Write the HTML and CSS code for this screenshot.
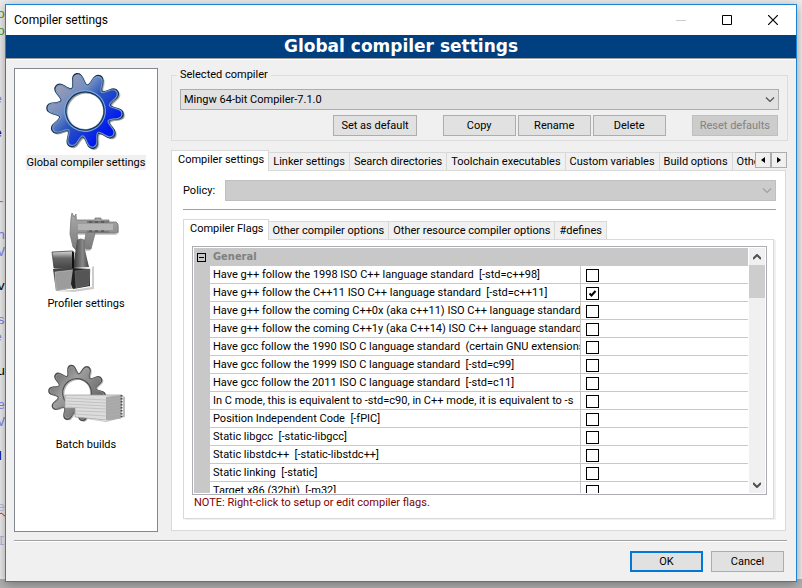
FILE: index.html
```html
<!DOCTYPE html>
<html lang="en">
<head>
<meta charset="utf-8">
<title>Compiler settings</title>
<link rel="stylesheet" href="styles.css">
</head>
<body>
<div class="editor" aria-hidden="true">
  <div class="line green">ro</div>
  <div class="line green">ro</div>
  <div class="line"></div><div class="line"></div><div class="line"></div>
  <div class="line violet cut">e</div>
  <div class="line"></div>
  <div class="line navy cut">e</div>
  <div class="line"></div><div class="line"></div><div class="line"></div>
  <div class="line orange">-</div>
  <div class="line"></div>
  <div class="line violet">th</div>
  <div class="line violet">V</div>
  <div class="line"></div>
  <div class="line">tv</div>
  <div class="line"></div>
  <div class="line violet">as</div>
  <div class="line violet cut">e</div>
  <div class="line"></div>
  <div class="line">lu</div>
  <div class="line"></div>
  <div class="line violet">e</div>
  <div class="line violet">V</div>
  <div class="line"></div>
  <div class="line navy cut">d</div>
  <div class="line"></div><div class="line"></div>
  <div class="line pale wavy">pe</div>
  <div class="line"></div>
  <div class="line pale">RI</div>
</div>

<main class="dialog">
  <header class="titlebar">
    <h1 class="caption">Compiler settings</h1>
    <button class="winbtn" aria-label="Minimize" disabled><svg width="10" height="10" viewBox="0 0 10 10"><path d="M0 5.500h10" stroke="#ccc"/></svg></button>
    <button class="winbtn" aria-label="Maximize"><svg width="10" height="10" viewBox="0 0 10 10"><path d="M.5.5h9v9h-9z" fill="none" stroke="#000"/></svg></button>
    <button class="winbtn" aria-label="Close"><svg width="10" height="10" viewBox="0 0 10 10"><path d="M0 0l10 10M10 0L0 10" stroke="#000" stroke-width="1.200"/></svg></button>
  </header>
  <h2 class="banner">Global compiler settings</h2>

  <div class="content">
    <nav class="pages" aria-label="Pages">
      <button class="page current">
        <svg class="picture" viewBox="0 0 82 82">
          <defs>
            <path id="gear" fill-rule="evenodd" d="M0-39.700Q4.500-39.700 5.500-33Q6.500-26.200 8.300-25.600Q10.100-25 14.900-29.900Q19.700-34.800 23.400-32.200Q27-29.500 23.900-23.500Q20.700-17.400 21.800-15.900Q22.900-14.300 29.700-15.500Q36.400-16.600 37.800-12.300Q39.200-8 33-5Q26.900-1.900 26.900 0Q26.900 1.900 33 5Q39.200 8 37.800 12.300Q36.400 16.600 29.700 15.500Q22.900 14.300 21.800 15.900Q20.700 17.400 23.900 23.500Q27 29.500 23.400 32.200Q19.700 34.800 14.900 29.900Q10.100 25 8.300 25.600Q6.500 26.200 5.500 33Q4.500 39.700 0 39.700Q-4.500 39.700-5.500 33Q-6.500 26.200-8.300 25.600Q-10.100 25-14.900 29.900Q-19.700 34.800-23.400 32.200Q-27 29.500-23.900 23.500Q-20.700 17.400-21.800 15.900Q-22.900 14.300-29.700 15.500Q-36.400 16.600-37.800 12.300Q-39.200 8-33 5Q-26.900 1.900-26.900 0Q-26.900-1.900-33-5Q-39.200-8-37.800-12.300Q-36.400-16.600-29.700-15.500Q-22.900-14.300-21.800-15.900Q-20.700-17.400-23.900-23.500Q-27-29.500-23.400-32.200Q-19.700-34.800-14.900-29.900Q-10.100-25-8.300-25.600Q-6.500-26.200-5.500-33Q-4.500-39.700 0-39.700ZM20 0A20 20 0 1 0-20 0A20 20 0 1 0 20 0Z"/>
            <linearGradient id="blue" gradientUnits="userSpaceOnUse" x1="-26" y1="-26" x2="10" y2="30">
              <stop offset="0" stop-color="#9a9cb4"/><stop offset=".3" stop-color="#6f8cc4"/><stop offset=".5" stop-color="#2f58bc"/><stop offset="1" stop-color="#0018f0"/>
            </linearGradient>
            <linearGradient id="steel" gradientUnits="userSpaceOnUse" x1="-26" y1="-26" x2="20" y2="30">
              <stop offset="0" stop-color="#777"/><stop offset=".3" stop-color="#a0a0a0"/><stop offset="1" stop-color="#606060"/>
            </linearGradient>
          </defs>
          <g transform="translate(40 41) rotate(-13) scale(.96)">
            <use href="#gear" x="2" y="2" fill="#000" opacity=".15"/>
            <use href="#gear" x="1" y="2" fill="#000" opacity=".3"/>
            <use href="#gear" fill="url(#blue)" stroke="#17324f" stroke-width="1.600"/>
            <use href="#gear" transform="scale(.97)" fill="none" stroke="#7fa6d8" stroke-width="1.300" opacity=".85"/>
            <circle r="20" fill="none" stroke="#17324f" stroke-width="1.300"/>
            <circle r="21.200" fill="none" stroke="#7fa6d8" stroke-width="1.200"/>
          </g>
        </svg>
        <span class="label">Global compiler settings</span>
      </button>
      <button class="page">
        <svg class="picture" viewBox="0 0 82 82">
          <defs>
            <linearGradient id="top" x2="0" y2="1"><stop stop-color="#ddd"/><stop offset=".4" stop-color="#666"/><stop offset="1" stop-color="#444"/></linearGradient>
            <linearGradient id="jaw" x2="0" y2="1"><stop stop-color="#aaa"/><stop offset="1" stop-color="#777"/></linearGradient>
            <linearGradient id="post"><stop stop-color="#333"/><stop offset=".6" stop-color="#888"/><stop offset="1" stop-color="#444"/></linearGradient>
          </defs>
          <path d="M11 80l16-1 20-3V56l2-1v23l-20 3z" fill="#000" opacity=".2"/>
          <path d="M27 3l2 3 2-2v6h33l2 2 6 1 1 2v6l-3 2H49l-5 16h-4l-3-4 3-12h-8l2 14 3 5-3 1-5-6-3-13V7z" fill="#000" opacity=".2" transform="translate(1 1)"/>
          <path d="M27 2l2 4 2-3v6h19V7h6v2h8v2h7l2 2v8l-3 1H50l-4 16h-5l-2-4 2-12h-9l1 13 3 6-2 1-6-6-3-13 1-16z" fill="url(#jaw)" stroke="#777" stroke-width=".8"/>
          <path d="M42 10h22v2H42zM42 20h22v2H42z" fill="#777"/><path d="M33 13h35v6H33z" fill="#b4b4b4"/><path d="M44 11h3m3 0h3m3 0h3M44 20h3m3 0h3m3 0h3" stroke="#444"/>
          <path d="M32 29q4-3 8 0c-1 9 2 18 4 27l-16 1z" fill="url(#post)"/>
          <path d="M7 41l20-1 2 1-1 17-19-1z" fill="url(#top)" stroke="#444" stroke-width=".8"/>
          <path d="M27 40l2 2v16l-2 2z" fill="#111"/>
          <path d="M8 58l20-1 1 20-18 3z" fill="#444"/><path d="M10 61l18-2-1 18-16 3z" fill="#9c9c9c" stroke="#ddd" stroke-width=".5"/>
          <path d="M28 57l17 1v17l-17 3-2-5z" fill="#222"/><path d="M30 60l15-2-1 16-13 3z" fill="#555" stroke="#777" stroke-width=".5"/>
        </svg>
        <span class="label">Profiler settings</span>
      </button>
      <button class="page">
        <svg class="picture" viewBox="0 0 82 82">
          <g transform="translate(32 41) rotate(-13) scale(.71)">
            <use href="#gear" x="2" y="2" fill="#000" opacity=".25"/>
            <use href="#gear" fill="url(#steel)" stroke="#4e4e4e" stroke-width="2"/>
            <use href="#gear" transform="scale(.96)" fill="none" stroke="#bbb" stroke-width="1" opacity=".6"/>
          </g>
          <path d="M30 65l31 5 19-5V45l-2-1v19l-17 6z" fill="#000" opacity=".25"/>
          <path d="M20 43h57l-1 23-15 2-31-3v-9H20z" fill="#dcdcdc" stroke="#999" stroke-width=".7"/>
          <path d="M61 45l16-2-1 23-15 2z" fill="#a8a8a8"/>
          <path d="M21 46l40 2 15-2M21 49l40 2 15-2M21 52l40 2 15-2M22 55l39 2 15-2M30 59l31 1 15-2M30 62l31 2 15-3" fill="none" stroke="#b0b0b0" stroke-width=".6"/>
          <path d="M76.500 43v22" stroke="#555" stroke-width="2" stroke-dasharray="1.500 1.500"/>
        </svg>
        <span class="label">Batch builds</span>
      </button>
    </nav>

    <section class="settings">
      <fieldset class="group">
        <legend>Selected compiler</legend>
        <select class="combo" aria-label="Selected compiler"><option>Mingw 64-bit Compiler-7.1.0</option></select>
        <div class="actions">
          <button class="btn wide">Set as default</button>
          <span class="trio">
            <button class="btn">Copy</button>
            <button class="btn">Rename</button>
            <button class="btn">Delete</button>
          </span>
          <button class="btn wide" disabled>Reset defaults</button>
        </div>
      </fieldset>

      <div class="notebook outer">
        <div class="tabs">
          <div class="strip" role="tablist">
            <button class="tab active" role="tab" aria-selected="true">Compiler settings</button>
            <button class="tab" role="tab">Linker settings</button>
            <button class="tab" role="tab">Search directories</button>
            <button class="tab" role="tab">Toolchain executables</button>
            <button class="tab" role="tab">Custom variables</button>
            <button class="tab" role="tab">Build options</button>
            <button class="tab" role="tab">Other settings</button>
          </div>
          <button class="scroll" aria-label="Scroll tabs left"><svg width="4" height="6" viewBox="0 0 4 6"><path d="M4 0v6L0 3z"/></svg></button>
          <button class="scroll" aria-label="Scroll tabs right"><svg width="4" height="6" viewBox="0 0 4 6"><path d="M0 0v6l4-3z"/></svg></button>
        </div>
        <div class="sheet">
          <div class="policy">
            <label for="policy">Policy:</label>
            <select class="combo" id="policy" disabled></select>
          </div>
          <hr class="rule">
          <div class="notebook inner">
            <div class="tabs">
              <div class="strip" role="tablist">
                <button class="tab active" role="tab" aria-selected="true">Compiler Flags</button>
                <button class="tab" role="tab">Other compiler options</button>
                <button class="tab" role="tab">Other resource compiler options</button>
                <button class="tab" role="tab">#defines</button>
              </div>
            </div>
            <div class="sheet">
              <div class="flags">
                <div class="viewport">
                  <table class="grid">
                    <colgroup><col class="col-margin"><col class="col-name"><col></colgroup>
                    <thead><tr><th class="margin"><button class="fold" aria-label="Collapse General"></button></th><th colspan="2" class="category">General</th></tr></thead>
                    <tbody>
                      <tr><td class="margin"></td><td class="name"><label for="f1">Have g++ follow the 1998 ISO C++ language standard&nbsp; [-std=c++98]</label></td><td><input type="checkbox" id="f1"></td></tr>
                      <tr><td class="margin"></td><td class="name"><label for="f2">Have g++ follow the C++11 ISO C++ language standard&nbsp; [-std=c++11]</label></td><td><input type="checkbox" id="f2" checked></td></tr>
                      <tr><td class="margin"></td><td class="name"><label for="f3">Have g++ follow the coming C++0x (aka c++11) ISO C++ language standard</label></td><td><input type="checkbox" id="f3"></td></tr>
                      <tr><td class="margin"></td><td class="name"><label for="f4">Have g++ follow the coming C++1y (aka C++14) ISO C++ language standard</label></td><td><input type="checkbox" id="f4"></td></tr>
                      <tr><td class="margin"></td><td class="name"><label for="f5">Have gcc follow the 1990 ISO C language standard&nbsp; (certain GNU extensions</label></td><td><input type="checkbox" id="f5"></td></tr>
                      <tr><td class="margin"></td><td class="name"><label for="f6">Have gcc follow the 1999 ISO C language standard&nbsp; [-std=c99]</label></td><td><input type="checkbox" id="f6"></td></tr>
                      <tr><td class="margin"></td><td class="name"><label for="f7">Have gcc follow the 2011 ISO C language standard&nbsp; [-std=c11]</label></td><td><input type="checkbox" id="f7"></td></tr>
                      <tr><td class="margin"></td><td class="name"><label for="f8">In C mode, this is equivalent to -std=c90, in C++ mode, it is equivalent to -s</label></td><td><input type="checkbox" id="f8"></td></tr>
                      <tr><td class="margin"></td><td class="name"><label for="f9">Position Independent Code&nbsp; [-fPIC]</label></td><td><input type="checkbox" id="f9"></td></tr>
                      <tr><td class="margin"></td><td class="name"><label for="f10">Static libgcc&nbsp; [-static-libgcc]</label></td><td><input type="checkbox" id="f10"></td></tr>
                      <tr><td class="margin"></td><td class="name"><label for="f11">Static libstdc++&nbsp; [-static-libstdc++]</label></td><td><input type="checkbox" id="f11"></td></tr>
                      <tr><td class="margin"></td><td class="name"><label for="f12">Static linking&nbsp; [-static]</label></td><td><input type="checkbox" id="f12"></td></tr>
                      <tr><td class="margin"></td><td class="name"><label for="f13">Target x86 (32bit)&nbsp; [-m32]</label></td><td><input type="checkbox" id="f13"></td></tr>
                    </tbody>
                  </table>
                </div>
                <div class="scrollbar">
                  <button aria-label="Scroll up"><svg width="8" height="6" viewBox="0 0 8 6"><path d="M0 5l4-4 4 4" fill="none" stroke="#505050" stroke-width="2"/></svg></button>
                  <div class="thumb"></div>
                  <button class="down" aria-label="Scroll down"><svg width="8" height="6" viewBox="0 0 8 6"><path d="M0 1l4 4 4-4" fill="none" stroke="#505050" stroke-width="2"/></svg></button>
                </div>
              </div>
              <p class="note">NOTE: Right-click to setup or edit compiler flags.</p>
            </div>
          </div>
        </div>
      </div>
    </section>
  </div>

  <footer class="footer">
    <button class="btn default">OK</button>
    <button class="btn">Cancel</button>
  </footer>
</main>
</body>
</html>
```
FILE: styles.css
```css
* { box-sizing: border-box; }

body {
  margin: 0;
  height: 100vh;
  display: grid;
  grid-template-columns: 5px minmax(0, 1fr) 5px;
  padding: 4px 0 6px;
  overflow: hidden;
  background: linear-gradient(to top, #b0b0b0 9px, #ececec 9px);
  color: #000;
  font: 11px/14px Roboto, "DejaVu Sans Condensed", sans-serif;
}

button, select, input {
  font: inherit;
  color: inherit;
  margin: 0;
  padding: 0;
  border-radius: 0;
}

/* Source editor behind the dialog */
.editor { overflow: hidden; padding-top: 2px; font: 13px/17px "Liberation Mono", monospace; }
.line { height: 17px; display: flex; justify-content: flex-end; }
.cut { padding-right: 3px; }
.green { color: #4a9a20; }
.violet { color: #8080f0; }
.navy { color: #0000a0; }
.orange { color: #f06030; }
.pale { color: #b8b8e0; }
.wavy { text-decoration: underline wavy #f00 1px; }

/* Dialog frame */
.dialog {
  display: flex;
  flex-direction: column;
  min-width: 0;
  min-height: 0;
  border: 1px solid #1883d7;
  background: #f0f0f0;
  box-shadow: 0 2px 10px rgba(0, 0, 0, .35);
}
.titlebar { display: flex; height: 30px; flex: none; background: #fff; }
.caption { flex: 1; margin: 0; padding-left: 8px; font-size: 12px; font-weight: normal; line-height: 30px; }
.winbtn { width: 46px; border: 0; background: none; display: grid; place-items: center; }
.banner {
  flex: none;
  margin: 0;
  background: #004080;
  color: #fff;
  border-bottom: 1px solid #a0a0a0;
  box-shadow: 0 1px #fff;
  text-align: center;
  font: bold 17px/23px "DejaVu Sans", sans-serif;
}
.content { flex: 1; min-height: 0; display: flex; gap: 13px; padding: 9px 8px 8px; }

/* Page list */
.pages {
  flex: none;
  width: 144px;
  border: 1px solid #828790;
  background: #fff;
  display: flex;
  flex-direction: column;
  align-items: center;
  gap: 38px;
  padding-top: 1px;
}
.page { border: 0; background: none; display: flex; flex-direction: column; align-items: center; gap: 3px; }
.picture { width: 82px; height: 82px; }
.label { line-height: 15px; padding: 0 1px; height: 18px; }
.current .label { background: #f0f0f0; height: 15px; margin-bottom: 3px; }

/* Right side */
.settings { flex: 1; min-width: 0; display: flex; flex-direction: column; gap: 9px; padding-bottom: 1px; }
.group { margin: 0; border: 1px solid #dcdcdc; padding: 7px 8px 4px; min-width: 0; }
.group legend { padding: 0 3px; line-height: 14px; margin-left: -3px; }
.combo {
  appearance: none;
  display: block;
  width: 100%;
  height: 21px;
  border: 1px solid #adadad;
  padding: 0 3px;
  background: #e1e1e1 url("data:image/svg+xml,%3Csvg xmlns='http://www.w3.org/2000/svg' width='10' height='6'%3E%3Cpath d='M1 .5l4 4 4-4' fill='none' stroke='%23505050' stroke-width='1.200'/%3E%3C/svg%3E") no-repeat right 3px center;
}
.combo:disabled {
  opacity: 1;
  border-color: #bfbfbf;
  background: #ccc url("data:image/svg+xml,%3Csvg xmlns='http://www.w3.org/2000/svg' width='10' height='6'%3E%3Cpath d='M1 .5l4 4 4-4' fill='none' stroke='%23a0a0a0' stroke-width='1.200'/%3E%3C/svg%3E") no-repeat right 3px center;
}
.actions { display: flex; justify-content: flex-end; gap: 26px; margin-top: 5px; padding-right: 1px; }
.trio { display: flex; gap: 2px; }
.btn { width: 73px; height: 21px; border: 1px solid #adadad; background: #e1e1e1; }
.btn.wide { width: auto; padding: 0 7px; }
.btn:disabled { background: #ccc; border-color: #bfbfbf; color: #838383; }
.btn.default { border: 2px solid #0078d7; }

/* Notebooks */
.notebook { flex: 1; min-height: 0; display: flex; flex-direction: column; }
.outer { margin-right: 1px; }
.tabs { flex: none; display: flex; align-items: flex-start; height: 20px; padding-top: 2px; }
.strip { flex: 1; min-width: 0; height: 18px; display: flex; overflow-x: clip; overflow-y: visible; }
.tab {
  flex: none;
  height: 18px;
  border: 1px solid #d9d9d9;
  border-left: 0;
  border-bottom: 0;
  background: #f0f0f0;
  padding: 1px 4px 0;
}
.tab.active {
  height: 21px;
  margin-top: -2px;
  border-left: 1px solid #d9d9d9;
  background: #fff;
  padding: 0 4px 3px 6px;
  position: relative;
}
.scroll { width: 16px; height: 16px; border: 1px solid #adadad; background: #f0f0f0; display: grid; place-items: center; }
.sheet {
  flex: 1;
  min-height: 0;
  display: flex;
  flex-direction: column;
  border: 1px solid #d9d9d9;
  background: #fff;
  padding: 9px 9px 11px 11px;
  margin-right: 1px;
}
.policy { display: flex; align-items: center; gap: 10px; flex: none; }
.rule { width: 100%; margin: 8px 0 9px; border: 0; border-top: 1px solid #a0a0a0; flex: none; }
.inner > .sheet { padding: 6px 6px 8px 8px; box-shadow: 2px 1px #f0f0f0; margin-right: 2px; }

/* Flag grid */
.flags { flex: 1; min-height: 0; display: flex; border: 1px solid #abadb3; padding: 1px; }
.viewport { flex: 1; min-width: 0; overflow: hidden; }
.grid { width: 100%; table-layout: fixed; border-collapse: separate; border-spacing: 0; }
.col-margin { width: 16px; }
.col-name { width: 67%; }
.grid th { height: 18px; padding: 0; background: #c8c8c8; }
.grid td { height: 18px; padding: 1px 0 0 5px; border-bottom: 1px solid #c8c8c8; line-height: 16px; }
.grid td.margin { padding: 0; background: #c8c8c8; }
.grid .category { padding-left: 3px; text-align: left; color: #808080; font-family: "DejaVu Sans Condensed", sans-serif; }
.grid .name { padding-left: 3px; border-right: 1px solid #c8c8c8; overflow: hidden; white-space: nowrap; }
.fold {
  display: block;
  width: 9px;
  height: 9px;
  margin-left: 3px;
  border: 1px solid #000;
  background: linear-gradient(#000, #000) center / 5px 1px no-repeat;
}
.grid input {
  appearance: none;
  display: block;
  width: 13px;
  height: 13px;
  border: 1px solid #000;
  background: #fff;
}
.grid input:checked {
  background: url("data:image/svg+xml,%3Csvg xmlns='http://www.w3.org/2000/svg' width='9' height='9'%3E%3Cpath d='M1.500 4.500l2 2 4-4.500' fill='none' stroke='%23000' stroke-width='2'/%3E%3C/svg%3E") center no-repeat;
}
.scrollbar { width: 17px; flex: none; display: flex; flex-direction: column; background: #f0f0f0; border-left: 1px solid #fff; }
.scrollbar button { height: 17px; border: 0; background: none; display: grid; place-items: center; }
.scrollbar .down { margin-top: auto; }
.thumb { height: 33px; background: #cdcdcd; }
.note { margin: 0; padding-left: 2px; color: #800000; line-height: 15px; flex: none; }

/* Footer */
.footer {
  flex: none;
  display: flex;
  justify-content: flex-end;
  gap: 8px;
  margin: 0 9px 0 8px;
  padding: 10px 3px 9px;
  border-top: 1px solid #a0a0a0;
  box-shadow: inset 0 1px #fff;
}
```
